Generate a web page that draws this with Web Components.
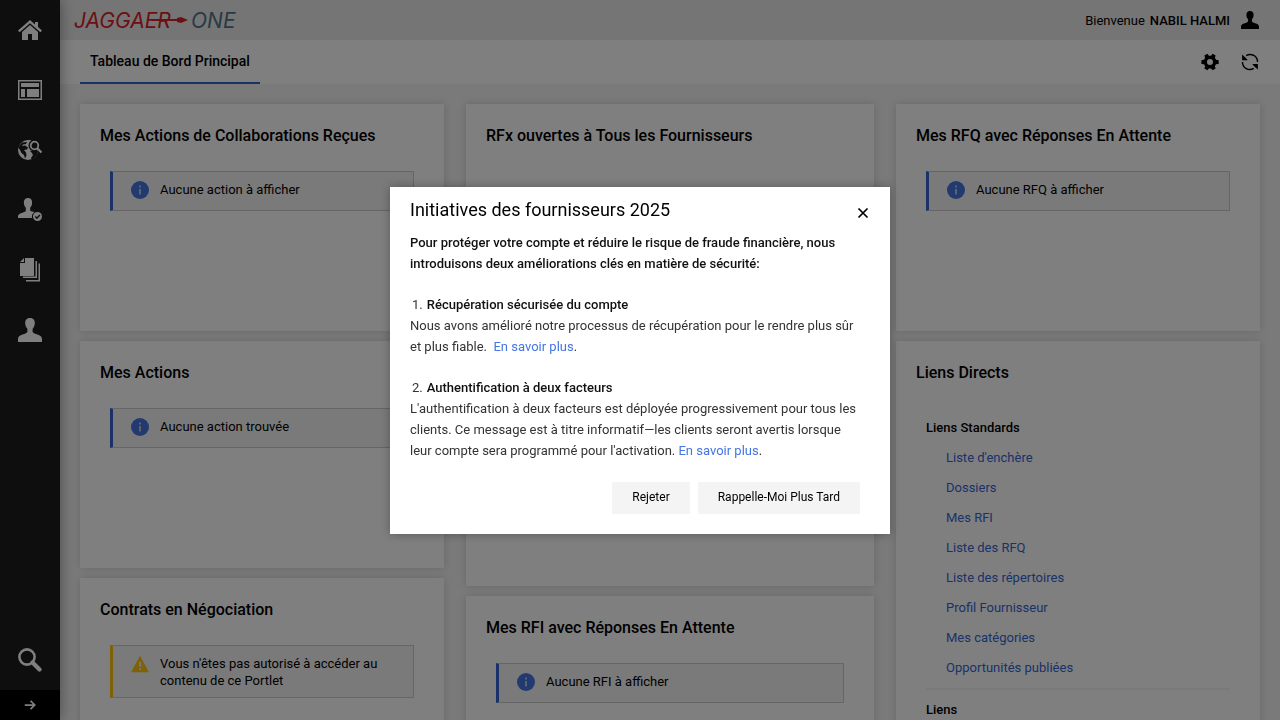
<!DOCTYPE html>
<html lang="fr">
<head>
<meta charset="utf-8">
<meta name="viewport" content="width=device-width, initial-scale=1">
<title>Tableau de Bord Principal</title>
<style>
html, body { margin: 0; height: 100%; overflow: hidden; }
body { font: 13px/17px Roboto, "Liberation Sans", sans-serif; color: #000; background: #f4f4f4; --accent: #3564d4; }
</style>
</head>
<body>
<app-shell>
  <side-nav slot="nav"></side-nav>
  <app-header slot="header" user="NABIL HALMI"></app-header>
  <tab-bar slot="tabs" label="Tableau de Bord Principal"></tab-bar>
  <portlet-grid>
    <portlet-column>
      <portlet-card heading="Mes Actions de Collaborations Reçues"><notice-box>Aucune action à afficher</notice-box></portlet-card>
      <portlet-card heading="Mes Actions"><notice-box>Aucune action trouvée</notice-box></portlet-card>
      <portlet-card heading="Contrats en Négociation"><notice-box kind="warning">Vous n'êtes pas autorisé à accéder au contenu de ce Portlet</notice-box></portlet-card>
    </portlet-column>
    <portlet-column>
      <portlet-card tall heading="RFx ouvertes à Tous les Fournisseurs"></portlet-card>
      <portlet-card heading="Mes RFI avec Réponses En Attente"><notice-box>Aucune RFI à afficher</notice-box></portlet-card>
    </portlet-column>
    <portlet-column>
      <portlet-card heading="Mes RFQ avec Réponses En Attente"><notice-box>Aucune RFQ à afficher</notice-box></portlet-card>
      <portlet-card heading="Liens Directs">
        <link-group heading="Liens Standards">
          <a href="#encheres">Liste d'enchère</a>
          <a href="#dossiers">Dossiers</a>
          <a href="#rfi">Mes RFI</a>
          <a href="#rfq">Liste des RFQ</a>
          <a href="#repertoires">Liste des répertoires</a>
          <a href="#profil">Profil Fournisseur</a>
          <a href="#categories">Mes catégories</a>
          <a href="#opportunites">Opportunités publiées</a>
        </link-group>
        <link-group heading="Liens"></link-group>
      </portlet-card>
    </portlet-column>
  </portlet-grid>
</app-shell>
<modal-dialog heading="Initiatives des fournisseurs 2025">
  <initiative-text></initiative-text>
  <action-button slot="actions">Rejeter</action-button>
  <action-button slot="actions">Rappelle-Moi Plus Tard</action-button>
</modal-dialog>

<script>
const define = (name, render, setup) => customElements.define(name, class extends HTMLElement {
  connectedCallback() {
    if (this.shadowRoot) return;
    this.attachShadow({ mode: 'open' }).innerHTML = render(this);
    if (setup) setup(this, this.shadowRoot);
  }
});

const icons = {
  home: '<path d="M12 2 0 12.500l1.600 1.800L12 5.200l10.400 9.100 1.600-1.800-4-3.500V4h-3v2.400z"/><path d="M12 7 4 14v8h6v-6h4v6h6v-8z"/>',
  board: '<path fill-rule="evenodd" d="M0 2h24v20H0zm1.500 1.500v17h21v-17z"/><path d="M3 5h18v4H3zM3 11h4v8H3zM9 11h12v8H9z"/>',
  globe: '<circle cx="10" cy="12" r="10"/><path fill="#1c1c1c" d="M0 9 4 4.500 9 4l-1 2-3 .5L4 8l3-.5 3 2-1 2-3 .5 2 2.500.5 3-1.500 3-1-3.500-2.500-2-1.500-3zM12 13l3-.5 3 .5 2 0-1 4-3.500 3.500L14 22l-1-2 2-3-1-2z"/><circle cx="16.500" cy="7.500" r="6" fill="#1c1c1c"/><path d="M9 2.500c2-.6 3-.5 4 0l-2 1.500-2 0z"/><circle cx="16.500" cy="7.500" r="3.800" fill="none" stroke="currentColor" stroke-width="1.800"/><path d="m19 10 4.500 4.500" fill="none" stroke="currentColor" stroke-width="2.200"/>',
  personCheck: '<path d="M10 0C7 0 5.700 2.300 5.900 5c.1 2 .8 3.500 1.900 4.700V13C5.500 15.200 0 15 0 18.500V20h14a6 6 0 0 1 2.500-6c-1.500-.5-3.300-.3-4.300-1.300V9.700c1.100-1.200 1.800-2.700 1.900-4.700.2-2.700-1.100-5-4.100-5z"/><circle cx="19.500" cy="18.500" r="4.500"/><path d="m17.300 18.500 1.600 1.700 3-3.200" fill="none" stroke="#1c1c1c" stroke-width="1.500"/>',
  docs: '<path d="M7 0h9v18H2V5h5z"/><path d="m6 0-4 4h4z"/><path d="M17.500 3H19v17H5v-1.500h12.500zM20.500 5.500H22v18H8V22h12.500z"/>',
  person: '<path d="M12 0C8.500 0 7 2.400 7.200 5.500c.1 2.200 1 4 2.200 5.300V14C7 17 0 16 0 21v3h24v-3c0-5-7-4-9.400-7v-3.200c1.200-1.300 2.100-3.100 2.200-5.300C17 2.400 15.500 0 12 0z"/>',
  search: '<circle cx="9" cy="9" r="7.600" fill="none" stroke="currentColor" stroke-width="2.600"/><path d="m14.500 14.500 7 7" fill="none" stroke="currentColor" stroke-width="4.200" stroke-linecap="round"/>',
  arrow: '<path d="M3 12h17M13 5l7 7-7 7" fill="none" stroke="currentColor" stroke-width="3"/>',
  gear: '<path fill-rule="evenodd" d="m8.500 1 2 2.500h3l2-2.500 4 2.300-1 3 1.500 2.700 3.500.5v5l-3.500.5-1.500 2.700 1 3-4 2.300-2-2.500h-3l-2 2.500-4-2.300 1-3L4 15 .5 14.500v-5L4 9l1.500-2.700-1-3zM12 8a4 4 0 1 0 0 8 4 4 0 0 0 0-8z"/>',
  refresh: '<path d="M7 3.500A9.800 9.800 0 0 1 22 12M17 20.500A9.800 9.800 0 0 1 2 12" fill="none" stroke="currentColor" stroke-width="1.900"/><path d="M1.500 2v7.500H9l-2.500-3zM22.500 22v-7.500H15l2.500 3z"/>',
  info: '<circle cx="12" cy="12" r="12" fill="#4475e1"/><path fill="#dcdcdc" d="M11 6h2v2.500h-2zM11 10.500h2V18h-2z"/>',
  warning: '<path fill="#ffc20e" d="M12 1 24 23H0z"/><path fill="#f4f4f4" d="M11 9h2.500v6.500H11zM11 17.500h2.500V20H11z"/>',
  close: '<path d="m3 3 18 18M21 3 3 21" fill="none" stroke="currentColor" stroke-width="3.500"/>'
};
const icon = name => `<svg viewBox="0 0 24 24" fill="currentColor" aria-hidden="true">${icons[name]}</svg>`;

define('app-shell', () => `<style>
  :host { display: grid; grid-template-columns: 60px minmax(0, 1fr); height: 100vh; }
  ::slotted([slot=nav]) { z-index: 1; }
  .main { display: flex; flex-direction: column; min-width: 0; min-height: 0; }
  main { flex: 1; min-height: 0; overflow-y: auto; scrollbar-width: none; }
</style><slot name="nav"></slot>
<div class="main"><slot name="header"></slot><slot name="tabs"></slot><main><slot></slot></main></div>`);

define('side-nav', () => `<style>
  :host { display: flex; flex-direction: column; background: #1c1c1c; color: #fff; box-shadow: 0 0 14px rgba(0,0,0,.4); min-height: 0; }
  nav { display: flex; flex-direction: column; flex: 1; }
  a, button { display: flex; align-items: center; justify-content: center; height: 60px; color: inherit; }
  a:last-child { margin-top: auto; }
  svg { width: 24px; height: 24px; }
  button { height: 30px; border: 0; padding: 0; background: #000; }
  button svg { width: 14px; height: 14px; }
</style><nav aria-label="Navigation principale">
${[['home', 'Accueil'], ['board', 'Tableau de bord'], ['globe', 'Sourcing'], ['personCheck', 'Qualification'], ['docs', 'Contrats'], ['person', 'Profil'], ['search', 'Rechercher']]
  .map(([i, label]) => `<a href="#${i}" aria-label="${label}">${icon(i)}</a>`).join('')}
</nav><button type="button" aria-label="Ouvrir le menu">${icon('arrow')}</button>`);

define('brand-logo', () => `<style>
  :host { display: block; }
  svg { display: block; width: 168px; height: 24px; }
  text { font: italic 400 21px Inter, "Liberation Sans", sans-serif; }
</style><svg viewBox="0 0 168 24" role="img" aria-label="JAGGAER ONE">
<text x="1" y="20" fill="#d8202c">JAGGAER</text><text x="118" y="20" fill="#54738d">ONE</text>
<path d="M79 12h28" stroke="#d8202c" stroke-width="2"/><path d="m104 10 4-1 7 3-7 3-4-1z" fill="#d8202c"/></svg>`);

define('app-header', el => `<style>
  :host { display: flex; align-items: center; justify-content: space-between; height: 40px; padding: 0 20px 0 13px; background: #ebebeb; flex: none; }
  .user { display: flex; align-items: center; gap: 5px; }
  b { font-weight: 500; }
  svg { width: 20px; height: 18px; display: block; }
  a { color: #000; margin-left: 5px; }
</style><brand-logo></brand-logo><div class="user"><span>Bienvenue</span><b>${el.getAttribute('user')}</b>
<a href="#profil" aria-label="Mon profil">${icon('person')}</a></div>`);

define('tab-bar', el => `<style>
  :host { display: flex; align-items: stretch; justify-content: space-between; height: 44px; padding: 0 20px; background: #fff; flex: none; }
  a { display: flex; align-items: center; box-sizing: border-box; padding: 0 10px; border-bottom: 2px solid var(--accent); color: #000; font-size: 14px; font-weight: 500; text-decoration: none; }
  .tools { display: flex; align-items: center; gap: 20px; }
  button { display: flex; justify-content: center; width: 20px; border: 0; padding: 0; background: none; color: #000; }
  svg { width: 18px; height: 18px; display: block; }
</style><a href="#principal" aria-current="page">${el.getAttribute('label')}</a>
<div class="tools"><button type="button" aria-label="Paramètres">${icon('gear')}</button><button type="button" aria-label="Actualiser">${icon('refresh')}</button></div>`);

define('portlet-grid', () => `<style>
  :host { display: grid; grid-template-columns: 91fr 102fr 91fr; gap: 22px; padding: 20px; align-items: start; }
</style><slot></slot>`);

define('portlet-column', () => `<style>
  :host { display: flex; flex-direction: column; gap: 10px; min-width: 0; }
</style><slot></slot>`);

define('portlet-card', el => `<style>
  :host { display: block; box-sizing: border-box; min-height: 227px; padding: 20px; background: #fff; box-shadow: 0 0 8px rgba(0,0,0,.15); }
  :host([tall]) { min-height: 482px; }
  h2 { margin: 0; font-size: 16px; line-height: 24px; font-weight: 500; }
  .body { padding: 23px 10px 0; }
</style><h2>${el.getAttribute('heading')}</h2><div class="body"><slot></slot></div>`);

define('notice-box', el => {
  const warn = el.getAttribute('kind') === 'warning';
  return `<style>
  :host { display: flex; gap: 11px; box-sizing: border-box; min-height: 40px; padding: 9px 18px 8px; background: #f4f4f4; border: 1px solid #ccc; border-left: 3px solid ${warn ? '#ffc20e' : 'var(--accent)'}; }
  svg { flex: none; width: 18px; height: 18px; }
</style>${icon(warn ? 'warning' : 'info')}<span><slot></slot></span>`;
});

define('link-group', el => `<style>
  :host { display: block; padding-top: 9px; }
  :host(:first-child) { padding-bottom: 5px; border-bottom: 2px solid #f4f4f4; }
  h3 { margin: 0; font-size: 13px; line-height: 22px; font-weight: 500; }
  .links { display: flex; flex-direction: column; align-items: flex-start; padding: 4px 20px 0; }
  ::slotted(a) { line-height: 30px; color: var(--accent); text-decoration: none; }
</style><h3>${el.getAttribute('heading')}</h3><div class="links"><slot></slot></div>`);

define('modal-dialog', el => `<style>
  :host { position: fixed; inset: 0; z-index: 10; display: flex; align-items: center; justify-content: center; background: rgba(0,0,0,.5); }
  section { box-sizing: border-box; width: 500px; max-width: 100%; padding: 10px 20px 20px; background: #fff; box-shadow: 0 0 10px rgba(0,0,0,.3); }
  header { display: flex; align-items: flex-end; justify-content: space-between; }
  h1 { margin: 0; font-size: 18px; line-height: 26px; font-weight: 400; }
  button { border: 0; padding: 4px 1px; background: none; color: #000; }
  svg { width: 12px; height: 12px; display: block; }
  footer { display: flex; justify-content: flex-end; gap: 8px; padding: 21px 10px 0; }
</style><section role="dialog" aria-modal="true" aria-labelledby="title">
<header><h1 id="title">${el.getAttribute('heading')}</h1><button type="button" aria-label="Fermer">${icon('close')}</button></header>
<slot></slot><footer><slot name="actions"></slot></footer></section>`,
  (el, root) => root.querySelector('button').addEventListener('click', () => el.remove()));

define('initiative-text', () => `<style>
  :host { display: block; padding: 9px 10px 0 0; line-height: 21px; color: #333; }
  p, h2 { margin: 0; font-size: 13px; font-weight: 400; }
  p + h2 { margin-top: 20px; }
  b { font-weight: 500; color: #111; }
  h2 { display: flex; gap: 4px; padding-left: 2px; }
  a { color: #4475e1; text-decoration: none; }
</style><p><b>Pour protéger votre compte et réduire le risque de fraude financière, nous introduisons deux améliorations clés en matière de sécurité:</b></p>
<h2><span>1.</span><b>Récupération sécurisée du compte</b></h2>
<p>Nous avons amélioré notre processus de récupération pour le rendre plus sûr et plus fiable.&nbsp; <a href="#recuperation">En savoir plus</a>.</p>
<h2><span>2.</span><b>Authentification à deux facteurs</b></h2>
<p>L'authentification à deux facteurs est déployée progressivement pour tous les clients. Ce message est à titre informatif—les clients seront avertis lorsque leur compte sera programmé pour l'activation. <a href="#authentification">En savoir plus</a>.</p>`);

define('action-button', () => `<style>
  :host { display: block; }
  button { height: 32px; padding: 0 20px; border: 0; background: #f4f4f4; color: #000; font: inherit; font-size: 12px; }
</style><button type="button"><slot></slot></button>`);
</script>
</body>
</html>
